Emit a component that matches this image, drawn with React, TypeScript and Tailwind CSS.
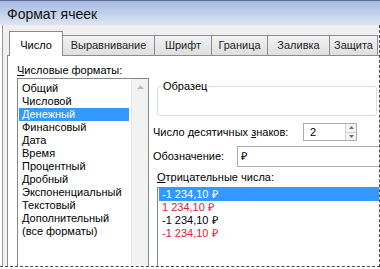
import React from "react";

const FORMATS = [
  "Общий",
  "Числовой",
  "Денежный",
  "Финансовый",
  "Дата",
  "Время",
  "Процентный",
  "Дробный",
  "Экспоненциальный",
  "Текстовый",
  "Дополнительный",
  "(все форматы)",
];

// ширины вкладок сняты со скриншота
const TABS = [
  { t: "Выравнивание", w: "w-[92px]" },
  { t: "Шрифт", w: "w-[57px]" },
  { t: "Граница", w: "w-[56px]" },
  { t: "Заливка", w: "w-[62px]" },
  { t: "Защита", w: "w-[48px]" },
];

const NEG = [
  { t: "-1 234,10 ₽", cls: "bg-[#3399ff] text-white" },
  { t: "1 234,10 ₽", cls: "text-[#e3222e]" },
  { t: "-1 234,10 ₽", cls: "text-black" },
  { t: "-1 234,10 ₽", cls: "text-[#e3222e]" },
];

export default function App() {
  return (
    <div className="w-[380px] h-[269px] overflow-hidden bg-white text-[11px] text-black [font-family:'Liberation_Sans',Arial,sans-serif] flex flex-col">
      {/* заголовок окна */}
      <div className="h-[25px] shrink-0 flex items-center pl-[7px] pt-[3px] border-t border-[#5d6f92] bg-gradient-to-b from-[#a6bae3] via-[#c0d0ec] to-[#dce5f3] text-[14px] text-[#111]">
        Формат ячеек
      </div>

      <div className="h-[242px] shrink-0 flex border-r border-b border-dashed border-[#4a4a4a]">
        <div className="flex-1 flex flex-col ml-[2px] border-l border-[#9a9a9a] bg-[#f0f0f0] pl-[4px]">
          {/* вкладки */}
          <div className="h-[30px] shrink-0 flex items-end pl-[2px]">
            <div className="w-[54px] h-[25px] -mb-px pt-[3px] flex items-center justify-center bg-white border border-b-0 border-[#898c95] relative z-10">
              Число
            </div>
            {TABS.map((t) => (
              <div
                key={t.t}
                className={`${t.w} shrink-0 h-[20px] flex items-center justify-center bg-gradient-to-b from-[#f4f4f4] to-[#dedede] border-t border-r border-[#898c95] text-[#1e1e1e]`}
              >
                {t.t}
              </div>
            ))}
          </div>

          <div className="flex-1 bg-white border-t border-l border-[#898c95] flex pt-[7px] pl-[9px]">
            {/* слева: список форматов */}
            <div className="w-[132px] shrink-0 flex flex-col">
              <div className="h-[15px] leading-[15px]">
                <span className="underline">Ч</span>исловые форматы:
              </div>
              <div className="flex-1 border border-b-0 border-[#828790] flex">
                <div className="flex-1 pt-[3px] pl-px pr-[2px]">
                  {FORMATS.map((f, i) => (
                    <div key={f} className={`h-[13px] leading-[13px] pl-[3px] ${i === 2 ? "bg-[#3399ff] text-white" : ""}`}>
                      {f}
                    </div>
                  ))}
                </div>
                <div className="w-[17px] shrink-0 bg-[#f2f2f2] border-l border-[#e4e4e4] flex justify-center pt-[6px]">
                  <svg width="7" height="4" viewBox="0 0 7 4">
                    <path d="M0 4 L3.5 0 L7 4 Z" fill="#bcbcbc" />
                  </svg>
                </div>
              </div>
            </div>

            {/* справа */}
            <div className="flex-1 pl-[4px] flex flex-col">
              <div className="h-[30px] mt-[23px] ml-[4px] mr-[2px] border border-[#d5dfe5] rounded-[3px] relative">
                <span className="absolute -top-[7px] left-[4px] bg-white px-px leading-[13px]">Образец</span>
              </div>

              <div className="flex items-center mt-[7px] h-[18px]">
                <span className="w-[150px] shrink-0">
                  Число десятичных <span className="underline">з</span>наков:
                </span>
                <div className="w-[54px] h-[18px] border border-[#abadb3] flex items-center">
                  <span className="flex-1 pl-[6px]">2</span>
                  <div className="w-[11px] h-full flex flex-col border-l border-[#d6d6d6] bg-[#f3f3f3]">
                    <div className="flex-1 flex items-center justify-center border-b border-[#d0d0d0]">
                      <svg width="5" height="3" viewBox="0 0 5 3">
                        <path d="M0 3 L2.5 0 L5 3 Z" fill="#6f6f6f" />
                      </svg>
                    </div>
                    <div className="flex-1 flex items-center justify-center">
                      <svg width="5" height="3" viewBox="0 0 5 3">
                        <path d="M0 0 L2.5 3 L5 0 Z" fill="#6f6f6f" />
                      </svg>
                    </div>
                  </div>
                </div>
              </div>

              <div className="flex items-center mt-[5px] h-[21px]">
                <span className="w-[84px] shrink-0">Обозначение:</span>
                <div className="flex-1 h-[21px] border border-r-0 border-[#abadb3] pl-[3px] flex items-center">₽</div>
              </div>

              <div className="h-[15px] leading-[15px] mt-[3px] ml-[4px]">
                <span className="underline">О</span>трицательные числа:
              </div>
              <div className="flex-1 mt-[2px] ml-[4px] border border-r-0 border-b-0 border-[#828790] pl-px">
                {NEG.map((n, i) => (
                  <div key={i} className={`h-[13px] leading-[13px] pl-[3px] ${n.cls}`}>
                    {n.t}
                  </div>
                ))}
              </div>
            </div>
          </div>
        </div>
      </div>
    </div>
  );
}
